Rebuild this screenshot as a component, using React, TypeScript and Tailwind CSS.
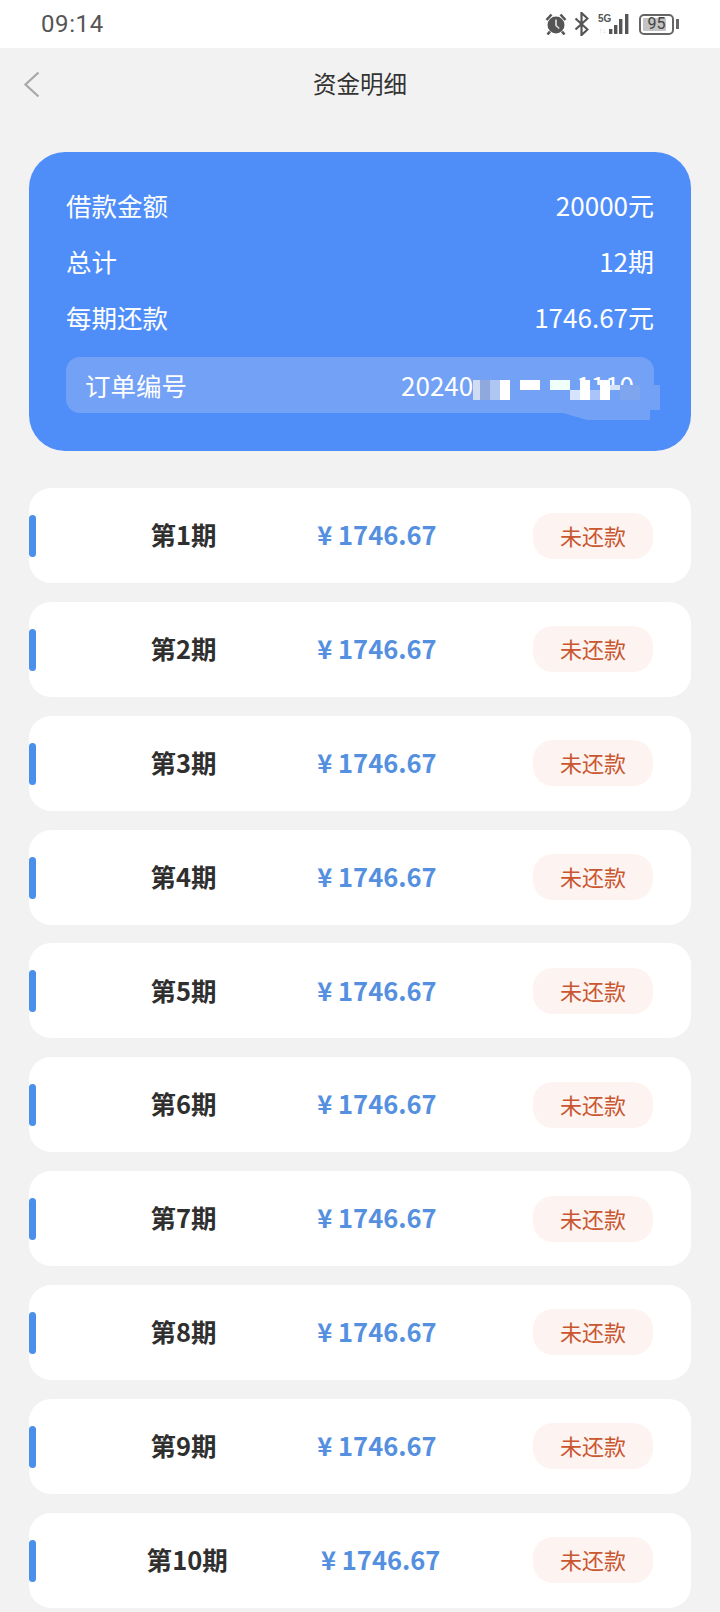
const font = { fontFamily: '"Noto Sans CJK SC", "Noto Sans", sans-serif' };

function StatusIcons() {
  return (
    <div className="flex items-center text-[#555]">
      <svg width="22" height="22" viewBox="0 0 22 22" className="mr-[7px]">
        <circle cx="11" cy="12" r="8.5" fill="#555" />
        <path d="M11 6.5v6l3.2 3" stroke="#ddd" strokeWidth="1.7" fill="none" />
        <path d="M1.5 7l5-5.5M20.5 7l-5-5.5M5 18.5l-2.5 3M17 18.5l2.5 3" stroke="#555" strokeWidth="2.6" />
      </svg>
      <svg width="15" height="24" viewBox="0 0 15 24" className="mr-[9px]">
        <path d="M1.5 6.5l12 11-6 5.5V1l6 5.5-12 11" stroke="#555" strokeWidth="2.2" fill="none" />
      </svg>
      <svg width="33" height="22" viewBox="0 0 33 22" className="mr-[8px]">
        <rect x="11" y="16" width="3.4" height="5" fill="#555" />
        <rect x="16" y="12" width="3.4" height="9" fill="#555" />
        <rect x="21" y="6" width="3.4" height="15" fill="#555" />
        <rect x="27" y="1" width="3.4" height="20" fill="#555" />
        <text x="0" y="9" fontSize="10" fontWeight="700" fill="#555" fontFamily="Liberation Sans, sans-serif">5G</text>
        <text x="1" y="20" fontSize="7" fill="#ccc" fontFamily="Liberation Sans, sans-serif">↑↓</text>
      </svg>
      <div className="flex items-center">
        <div className="w-[35px] h-[21px] border-2 border-[#666] rounded-[5px] p-[2px] flex relative">
          <div className="flex-1 bg-[#c4c4c4] rounded-[1px] mr-[4px]" />
          <span className="absolute inset-0 flex items-center justify-center text-[16px] text-[#444] leading-none" style={{ fontFamily: "Roboto, sans-serif" }}>95</span>
        </div>
        <div className="w-[3px] h-[10px] bg-[#666] ml-[2px]" />
      </div>
    </div>
  );
}

function InfoRow({ label, value }: { label: string; value: string }) {
  return (
    <div className="flex justify-between items-center h-[56px] text-white leading-none">
      <span className="text-[25.5px]">{label}</span>
      <span className="text-[26px]">{value}</span>
    </div>
  );
}

const mosaic: [number, number, number, number, string][] = [
  [473, 380, 7, 20, "#d0dcf4"],
  [480, 380, 10, 20, "#8fa9dc"],
  [490, 380, 10, 20, "#b0c6f2"],
  [500, 380, 10, 20, "#ffffff"],
  [520, 380, 20, 10, "#ffffff"],
  [550, 380, 20, 10, "#f0fffa"],
  [570, 390, 10, 10, "#d5e3fc"],
  [580, 380, 10, 20, "#ffffff"],
  [590, 390, 10, 10, "#a9c4f8"],
  [600, 380, 10, 20, "#ffffff"],
  [610, 385, 10, 5, "#d5e3fc"],
  [620, 385, 20, 15, "#7fa5ee"],
];

function Row({ n }: { n: number }) {
  return (
    <div className="relative h-[95px] bg-white rounded-[22px] flex items-center pl-[71px] pr-[38px]">
      <div className="absolute left-0 top-[27px] w-[7px] h-[42px] bg-[#4a8fea] rounded-[4px]" />
      <div className="flex-1 flex items-center justify-around mr-[46px] pb-[3px]">
        <span className="text-[25.5px] font-bold text-[#2f2f2f] leading-none">第{n}期</span>
        <span className="text-[25.5px] font-bold text-[#5590e0] leading-none">¥ 1746.67</span>
      </div>
      <div className="w-[120px] h-[46px] rounded-[20px] bg-[#fdf3f1] flex items-center justify-center pb-[2px] text-[22px] text-[#c9562f] leading-none">
        未还款
      </div>
    </div>
  );
}

export default function App() {
  return (
    <div className="w-[720px] h-[1612px] bg-[#f2f2f2] overflow-hidden" style={font}>
      <div className="h-[48px] bg-white flex items-center justify-between pl-[41px] pr-[41px]">
        <span className="text-[24px] text-[#555] leading-none tracking-[0.6px]" style={{ fontFamily: "Roboto, sans-serif" }}>09:14</span>
        <StatusIcons />
      </div>
      <div className="relative h-[72px] flex items-center justify-center">
        <svg width="17" height="27" viewBox="0 0 17 27" className="absolute left-[23px] top-[23px]">
          <path d="M15.5 1.5L2.5 13.5l13 12" stroke="#a8a8a8" strokeWidth="2.2" fill="none" />
        </svg>
        <span className="text-[23.5px] text-[#333] leading-none">资金明细</span>
      </div>
      <div className="px-[29px] pt-[32px]">
        <div className="relative h-[299px] bg-[#4f8ef9] rounded-[36px] px-[37px] pt-[25px]">
          <InfoRow label="借款金额" value="20000元" />
          <InfoRow label="总计" value="12期" />
          <InfoRow label="每期还款" value="1746.67元" />
          <div className="mt-[12px] h-[56px] rounded-[14px] bg-[#72a1f6] flex items-center pl-[19px] pr-[20px] text-white leading-none">
            <span className="text-[25.5px]">订单编号</span>
            <span className="ml-[214px] text-[26px]">20240</span>
            <span className="ml-auto text-[26px]">1110</span>
          </div>
          <div className="absolute left-[444px] top-[233px] w-[187px] h-[35px] bg-[#72a1f6] [clip-path:polygon(0_0,100%_0,100%_25px,177px_25px,177px_35px,114px_35px,90px_28px,0_28px)]" />
          {mosaic.map(([x, y, w, h, c], i) => (
            <div key={i} className="absolute" style={{ left: x - 29, top: y - 152, width: w, height: h, background: c }} />
          ))}
        </div>
        <div className="mt-[37px] flex flex-col gap-[18.85px]">
          {[1, 2, 3, 4, 5, 6, 7, 8, 9, 10].map((n) => (
            <Row key={n} n={n} />
          ))}
        </div>
      </div>
    </div>
  );
}
